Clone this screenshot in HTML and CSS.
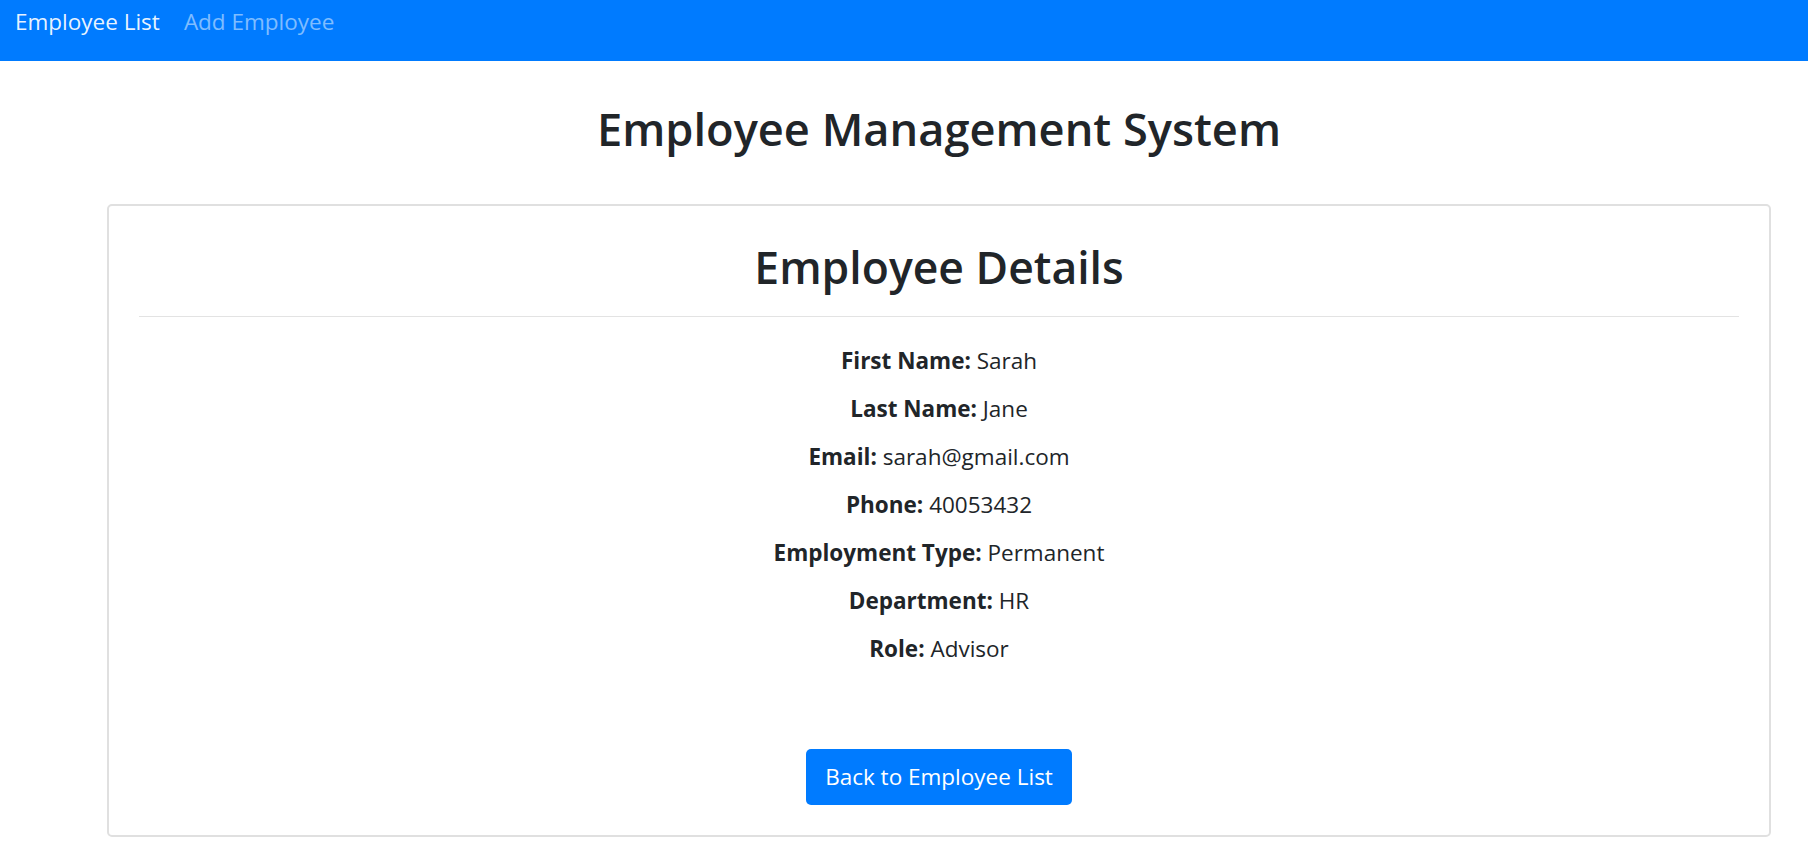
FILE: index.html
```html
<!DOCTYPE html>
<html lang="en">
<head>
<meta charset="utf-8">
<title>Employee Management System</title>
<link rel="stylesheet" href="styles.css">
</head>
<body>
<nav class="navbar">
  <a class="nav-link active" href="#">Employee List</a>
  <a class="nav-link" href="#">Add Employee</a>
</nav>
<main class="container">
  <h1 class="page-title">Employee Management System</h1>
  <div class="card">
    <h2 class="card-title">Employee Details</h2>
    <hr class="divider">
    <div class="details">
      <p class="row"><strong>First Name:</strong> Sarah</p>
      <p class="row"><strong>Last Name:</strong> Jane</p>
      <p class="row"><strong>Email:</strong> sarah@gmail.com</p>
      <p class="row"><strong>Phone:</strong> 40053432</p>
      <p class="row"><strong>Employment Type:</strong> Permanent</p>
      <p class="row"><strong>Department:</strong> HR</p>
      <p class="row"><strong>Role:</strong> Advisor</p>
    </div>
    <div class="actions">
      <a class="btn" href="#">Back to Employee List</a>
    </div>
  </div>
</main>
</body>
</html>
```
FILE: styles.css
```css
* { box-sizing: border-box; }
html, body { margin: 0; padding: 0; }
body {
  font-family: "Open Sans", "Noto Sans", sans-serif;
  color: #212529;
  background: #fff;
}
.navbar {
  display: flex;
  gap: 24px;
  height: 61px;
  padding: 7px 15px 0;
  background: #007bff;
}
.nav-link {
  font-size: 22.5px;
  line-height: 30px;
  height: 30px;
  text-decoration: none;
  color: rgba(255, 255, 255, 0.5);
}
.nav-link.active { color: rgba(255, 255, 255, 0.92); }
.container {
  margin: 0 37px 0 107px;
}
.page-title {
  margin: 38px 0 0;
  text-align: center;
  font-size: 45.2px;
  font-weight: 600;
  line-height: 60px;
}
.card {
  margin-top: 45px;
  border: 2px solid #e0e0e0;
  border-radius: 5px;
  padding: 30px;
  text-align: center;
}
.card-title {
  margin: 0 0 18px;
  font-size: 44.5px;
  font-weight: 600;
  line-height: 62px;
}
.divider {
  margin: 0 0 29px;
  border: 0;
  border-top: 1px solid #e3e3e3;
}
.row {
  margin: 0 0 18px;
  font-size: 22.5px;
  line-height: 30px;
}
.row strong { font-weight: 700; }
.actions { padding-top: 67px; }
.btn {
  display: inline-block;
  height: 56px;
  line-height: 56px;
  padding: 0 19px;
  font-size: 22.5px;
  color: #fff;
  background: #007bff;
  border-radius: 5px;
  text-decoration: none;
}
```
